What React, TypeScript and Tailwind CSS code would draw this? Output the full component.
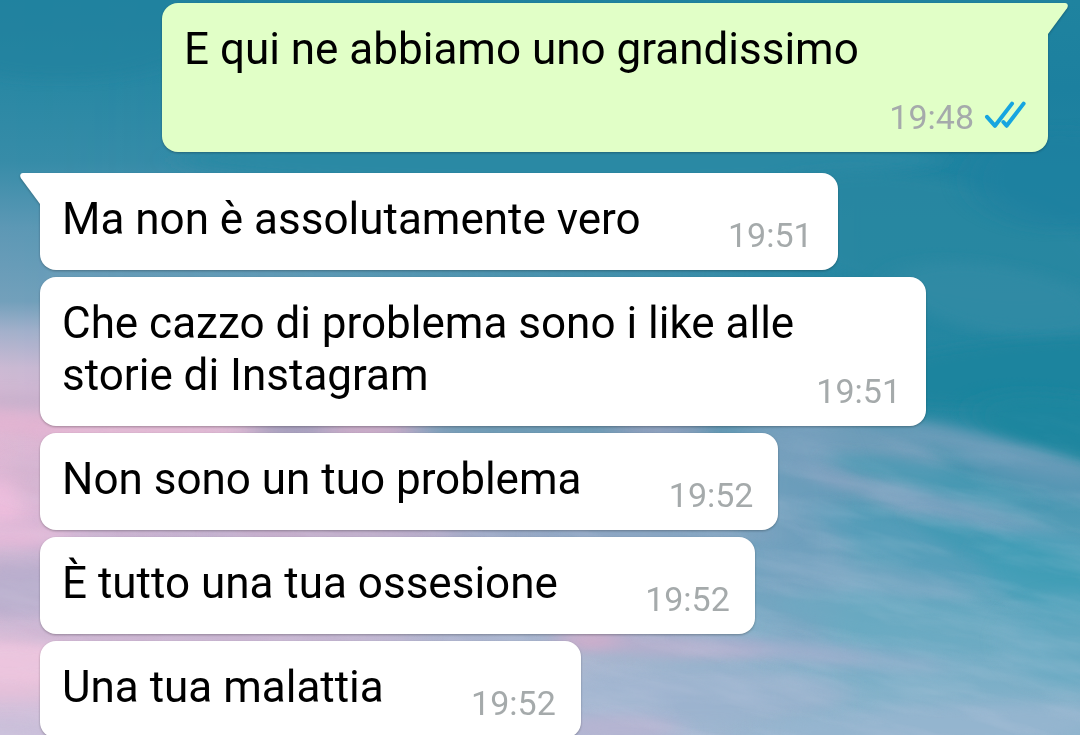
type Message = {
  id: number;
  text: string;
  time: string;
  outgoing?: boolean;
  tail?: boolean;
};

const messages: Message[] = [
  { id: 1, text: "E qui ne abbiamo uno grandissimo", time: "19:48", outgoing: true, tail: true },
  { id: 2, text: "Ma non è assolutamente vero", time: "19:51", tail: true },
  { id: 3, text: "Che cazzo di problema sono i like alle storie di Instagram", time: "19:51" },
  { id: 4, text: "Non sono un tuo problema", time: "19:52" },
  { id: 5, text: "È tutto una tua ossesione", time: "19:52" },
  { id: 6, text: "Una tua malattia", time: "19:52" },
];

/* Soft clouds of the sky: cx, cy, rx, ry, colour, opacity, rotation */
type Cloud = [number, number, number, number, string, number, number];

const clouds: Cloud[] = [
  [60, 20, 160, 60, "#20829f", 0.6, 0],
  [940, 240, 180, 60, "#2988a2", 0.7, 12],
  [1000, 300, 110, 34, "#328ba5", 0.8, 10],
  [1060, 180, 90, 50, "#1b80a0", 0.6, 0],
  [1030, 372, 170, 32, "#1a849e", 0.9, -4],
  [1080, 430, 110, 34, "#1b869f", 0.9, 10],
  [840, 450, 110, 34, "#749fbb", 0.9, 10],
  [990, 450, 120, 14, "#739fbc", 0.8, 14],
  [800, 530, 50, 120, "#79a1c0", 0.6, 0],
  [930, 480, 100, 16, "#4a9ab4", 0.8, 12],
  [890, 498, 90, 10, "#8ba5c3", 0.7, 18],
  [1040, 478, 90, 14, "#6499b7", 0.6, 14],
  [990, 522, 120, 12, "#83a5c3", 0.7, 18],
  [920, 550, 110, 22, "#569fbb", 0.6, 20],
  [1010, 555, 100, 18, "#3f9ab4", 0.8, 20],
  [1060, 575, 80, 40, "#409fb7", 0.7, 16],
  [860, 578, 110, 16, "#7fa8c4", 0.6, 8],
  [900, 620, 130, 22, "#6dabc3", 0.6, 8],
  [830, 655, 120, 12, "#98b0cd", 0.6, 6],
  [660, 645, 110, 12, "#b9afce", 0.8, 4],
  [780, 650, 90, 8, "#a8b0cf", 0.6, 6],
  [700, 695, 150, 28, "#9cb3cf", 0.7, 0],
  [590, 640, 30, 12, "#d6aecb", 0.7, 0],
  [620, 728, 60, 14, "#b8b4d2", 0.8, 0],
  [920, 730, 180, 24, "#97b6d0", 0.8, -4],
  [1070, 640, 60, 50, "#5ba6bf", 0.5, 0],
  [10, 402, 60, 10, "#c0acc8", 0.5, 0],
  [30, 425, 60, 12, "#e5b4d2", 0.6, 10],
  [2, 502, 20, 24, "#f6bfe0", 0.8, 0],
  [36, 478, 22, 22, "#d0b2ce", 0.6, 0],
  [10, 536, 60, 12, "#e8bbda", 0.8, 0],
  [20, 590, 70, 26, "#b9afcd", 0.8, 0],
  [10, 664, 70, 26, "#eec6df", 0.9, 0],
  [10, 690, 60, 10, "#e6bfd8", 0.6, 0],
  [10, 732, 60, 14, "#cbc0da", 0.9, 0],
  [160, 430, 110, 10, "#e8bcd6", 0.8, 0],
  [290, 430, 40, 8, "#9c99b7", 0.8, 0],
  [370, 430, 44, 8, "#d4a9c6", 0.8, 0],
  [530, 430, 110, 10, "#689ab3", 0.9, 0],
  [660, 430, 50, 8, "#9a9fbe", 0.7, 0],
  [340, 534, 120, 8, "#ceadca", 0.6, 0],
  [660, 534, 120, 8, "#8fa6c4", 0.6, 0],
  [200, 637, 220, 8, "#cab2cf", 0.6, 0],
];

function Sky() {
  return (
    <svg
      className="absolute inset-0 size-full"
      viewBox="0 0 1080 735"
      preserveAspectRatio="none"
      aria-hidden="true"
    >
      <defs>
        <linearGradient id="right" x1="0" y1="0" x2="0" y2="1">
          <stop offset="0" stopColor="#1f839f" />
          <stop offset="0.12" stopColor="#1c809f" />
          <stop offset="0.3" stopColor="#2385a1" />
          <stop offset="0.55" stopColor="#2587a1" />
          <stop offset="0.68" stopColor="#4a97b2" />
          <stop offset="0.85" stopColor="#66a9c1" />
          <stop offset="1" stopColor="#8fb4cd" />
        </linearGradient>
        <linearGradient id="left" x1="0" y1="0" x2="0" y2="1">
          <stop offset="0" stopColor="#1f829f" />
          <stop offset="0.12" stopColor="#2a88a4" />
          <stop offset="0.22" stopColor="#378ca8" />
          <stop offset="0.31" stopColor="#5d98b5" />
          <stop offset="0.41" stopColor="#73a0bb" />
          <stop offset="0.45" stopColor="#a3b0cb" />
          <stop offset="0.5" stopColor="#cbb9d3" />
          <stop offset="0.58" stopColor="#dfb6d3" />
          <stop offset="0.7" stopColor="#dcb7d5" />
          <stop offset="0.8" stopColor="#bcaecd" />
          <stop offset="0.9" stopColor="#e4c2dc" />
          <stop offset="1" stopColor="#ccbfda" />
        </linearGradient>
        <linearGradient id="fade" x1="0" y1="0" x2="1" y2="0">
          <stop offset="0" stopColor="#fff" />
          <stop offset="0.25" stopColor="#fff" stopOpacity="0.85" />
          <stop offset="0.6" stopColor="#fff" stopOpacity="0.4" />
          <stop offset="0.8" stopColor="#fff" stopOpacity="0" />
        </linearGradient>
        <mask id="leftMask">
          <rect width="1080" height="735" fill="url(#fade)" />
        </mask>
        <filter id="soft" x="-50%" y="-200%" width="200%" height="500%">
          <feGaussianBlur stdDeviation="14 6" />
        </filter>
        <filter id="wisps" x="0" y="0" width="100%" height="100%">
          <feTurbulence type="fractalNoise" baseFrequency="0.01 0.05" numOctaves="4" seed="7" />
          <feColorMatrix values="0 0 0 0 0.72  0 0 0 0 0.7  0 0 0 0 0.84  1.6 0 0 0 -0.6" />
        </filter>
        <linearGradient id="low" x1="0" y1="0" x2="0" y2="1">
          <stop offset="0.55" stopColor="#fff" stopOpacity="0" />
          <stop offset="0.68" stopColor="#fff" stopOpacity="0.22" />
        </linearGradient>
        <mask id="lowMask">
          <rect width="1080" height="735" fill="url(#low)" />
        </mask>
      </defs>
      <rect width="1080" height="735" fill="url(#right)" />
      <rect width="1080" height="735" fill="url(#left)" mask="url(#leftMask)" />
      <ellipse cx="560" cy="160" rx="380" ry="24" fill="#2c89a4" filter="url(#soft)" />
      {clouds.map(([cx, cy, rx, ry, fill, opacity, turn], i) => (
        <ellipse
          key={i}
          cx={cx}
          cy={cy}
          rx={rx}
          ry={ry}
          fill={fill}
          opacity={opacity}
          transform={`rotate(${turn} ${cx} ${cy})`}
          filter="url(#soft)"
        />
      ))}
      <g mask="url(#lowMask)">
        <g transform="rotate(12 900 580)">
          <rect x="-200" y="0" width="1500" height="1000" filter="url(#wisps)" />
        </g>
      </g>
    </svg>
  );
}

function Tail({ outgoing }: { outgoing?: boolean }) {
  return (
    <svg
      viewBox="0 0 20 31"
      aria-hidden="true"
      className={
        outgoing
          ? "absolute left-full top-0 h-[31px] w-5 fill-[#e1ffc7]"
          : "absolute right-full top-0 h-[31px] w-5 fill-white"
      }
    >
      {outgoing ? (
        <path d="M-1 0H17C19.8 0 20.6 2.8 19 5.2L0 31H-1Z" />
      ) : (
        <path d="M21 0H3C0.2 0-0.6 2.8 1 5.2L20 31H21Z" />
      )}
    </svg>
  );
}

function ReadTicks() {
  return (
    <svg
      viewBox="0 0 42 32"
      role="img"
      aria-label="Letto"
      className="h-8 w-[42px] fill-none stroke-[#16a5e0]"
      strokeWidth="4"
      strokeLinecap="round"
      strokeLinejoin="round"
    >
      <path d="M3 15.8L11 24.8L28 2.6" />
      <path d="M19.4 21L22.6 24.8L39.6 2.6" />
    </svg>
  );
}

function Bubble({ message }: { message: Message }) {
  const { text, time, outgoing, tail } = message;
  return (
    <li
      className={`relative max-w-[886px] px-[22px] pb-[25px] pt-5 text-[44px] leading-[52px] text-black drop-shadow-[0_1px_1px_rgba(0,0,0,0.28)] ${
        outgoing ? "self-end bg-[#e1ffc7]" : "self-start bg-white"
      } ${tail ? (outgoing ? "rounded-b-2xl rounded-tl-2xl" : "rounded-b-2xl rounded-tr-2xl") : "rounded-2xl"} ${
        outgoing ? "mb-3.5" : ""
      }`}
    >
      {tail && <Tail outgoing={outgoing} />}
      <span>{text}</span>
      {/* Keeps room for the time stamp at the end of the last line */}
      <span className={`inline-block h-px ${outgoing ? "w-56" : "w-[175px]"}`} />
      <span
        className={`absolute bottom-[15px] flex items-center gap-2.5 text-[34px] leading-10 text-[#a5aaab] ${
          outgoing ? "right-[22px]" : "right-[25px]"
        }`}
      >
        <time>{time}</time>
        {outgoing && <ReadTicks />}
      </span>
    </li>
  );
}

export default function App() {
  return (
    <main className="relative h-screen overflow-hidden bg-[#2385a1] font-[Roboto,sans-serif]">
      <Sky />
      <ul className="relative flex flex-col gap-[7px] pl-10 pr-8 pt-[3px]">
        {messages.map((message) => (
          <Bubble key={message.id} message={message} />
        ))}
      </ul>
    </main>
  );
}
